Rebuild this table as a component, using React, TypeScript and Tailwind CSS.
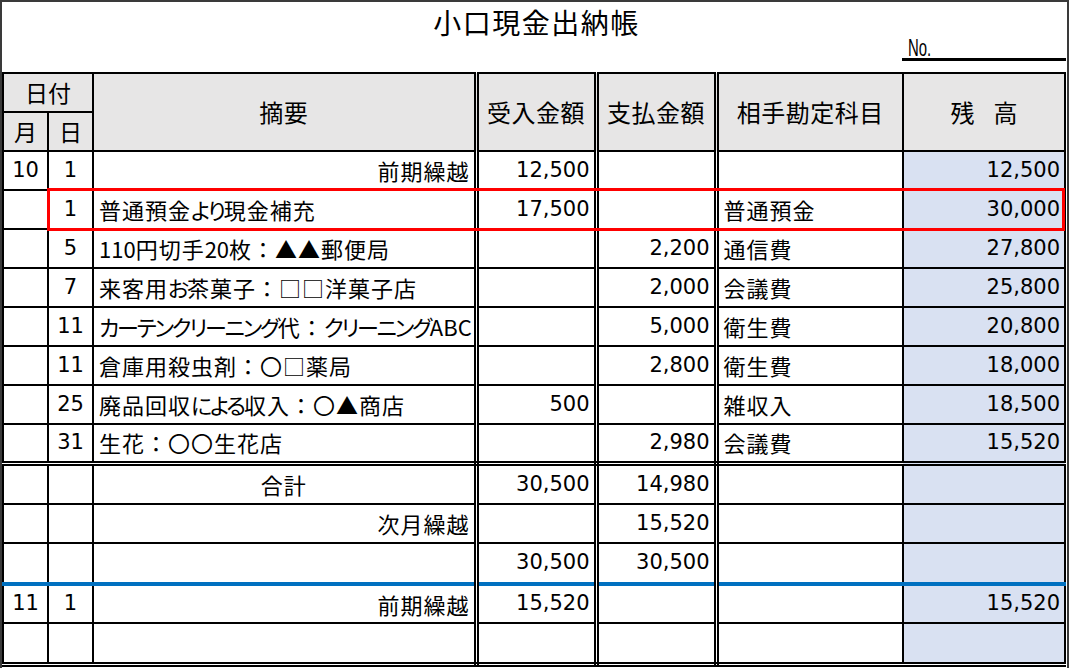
import React from "react";

type Row = {
  m?: string;
  d?: string;
  desc?: string;
  align?: "left" | "right" | "center";
  inn?: string;
  out?: string;
  acct?: string;
  bal?: string;
  bottom?: "double" | "blue";
  h: string;
};

const rows: Row[] = [
  { m: "10", d: "1", desc: "前期繰越", align: "right", inn: "12,500", bal: "12,500", h: "h-[39px]" },
  { d: "1", desc: "普通預金より現金補充", inn: "17,500", acct: "普通預金", bal: "30,000", h: "h-[39px]" },
  { d: "5", desc: "110円切手20枚：▲▲郵便局", out: "2,200", acct: "通信費", bal: "27,800", h: "h-[39px]" },
  { d: "7", desc: "来客用お茶菓子：□□洋菓子店", out: "2,000", acct: "会議費", bal: "25,800", h: "h-[39px]" },
  { d: "11", desc: "カーテンクリーニング代：クリーニングABC", out: "5,000", acct: "衛生費", bal: "20,800", h: "h-[39px]" },
  { d: "11", desc: "倉庫用殺虫剤：〇□薬局", out: "2,800", acct: "衛生費", bal: "18,000", h: "h-[39px]" },
  { d: "25", desc: "廃品回収による収入：〇▲商店", inn: "500", acct: "雑収入", bal: "18,500", h: "h-[39px]" },
  { d: "31", desc: "生花：〇〇生花店", out: "2,980", acct: "会議費", bal: "15,520", bottom: "double", h: "h-[39px]" },
  { desc: "合計", align: "center", inn: "30,500", out: "14,980", h: "h-[41px]" },
  { desc: "次月繰越", align: "right", out: "15,520", h: "h-[39px]" },
  { inn: "30,500", out: "30,500", bottom: "blue", h: "h-[41px]" },
  { m: "11", d: "1", desc: "前期繰越", align: "right", inn: "15,520", bal: "15,520", h: "h-[39px]" },
  { bottom: "double", h: "h-[41px]" },
];

const NUM = "font-['DejaVu_Sans','Noto_Sans_CJK_JP',sans-serif] text-[21px]";
const JP = "font-['Noto_Sans_CJK_JP',sans-serif] text-[22px]";

function JpText({ text }: { text: string }) {
  const parts = text.match(/[ぁ-ゖァ-ヺー]+|[A-Za-z0-9]+|[^ぁ-ゖァ-ヺーA-Za-z0-9]+/g) ?? [];
  return (
    <>
      {parts.map((p, i) => {
        if (/[ぁ-ゖァ-ヺー]/.test(p[0]))
          return (
            <span key={i} className="[font-feature-settings:'palt'] tracking-[-2.2px]">
              {p}
            </span>
          );
        if (/[A-Za-z0-9]/.test(p[0]))
          return (
            <span key={i} className="tracking-[0px]">
              {p}
            </span>
          );
        return (
          <span key={i} className="tracking-[1px]">
            {p}
          </span>
        );
      })}
    </>
  );
}

export default function App() {
  const th = `border-2 border-black font-normal p-0 ${JP}`;
  return (
    <div className="w-[1069px] h-[668px] bg-white border-t-2 border-l-2 border-r-2 border-[#3a3a3a] relative overflow-hidden text-black">
      <div className="h-[70px] flex flex-col">
        <div className="text-center font-['Noto_Sans_CJK_JP',sans-serif] text-[28px] leading-[30px] tracking-[1.5px] pt-[5px] pl-[4px]">
          小口現金出納帳
        </div>
        <div className="flex justify-end pr-[1px]">
          <div className="w-[164px] h-[24px] border-b-[3px] border-black pl-[6px] flex items-end">
            <span className="font-['Liberation_Sans',sans-serif] text-[24px] leading-[21px] inline-block origin-left scale-x-[0.62]">
              No.
            </span>
          </div>
        </div>
      </div>
      <table className="border-collapse table-fixed w-[1064px]">
        <colgroup>
          <col className="w-[45px]" />
          <col className="w-[45px]" />
          <col className="w-[383px]" />
          <col className="w-[120px]" />
          <col className="w-[120px]" />
          <col className="w-[187px]" />
          <col className="w-[162px]" />
        </colgroup>
        <thead>
          <tr className="h-[39px] bg-[#e7e6e6]">
            <th colSpan={2} className={`${th} text-[23px]`}>日付</th>
            <th rowSpan={2} className={`${th} text-[24px] tracking-[0.5px] [border-right:5px_double_#000]`}>摘要</th>
            <th rowSpan={2} className={`${th} text-[24px] tracking-[0.5px] [border-right:5px_double_#000]`}>受入金額</th>
            <th rowSpan={2} className={`${th} text-[24px] tracking-[0.5px] [border-right:5px_double_#000]`}>支払金額</th>
            <th rowSpan={2} className={`${th} text-[24px] tracking-[0.5px]`}>相手勘定科目</th>
            <th rowSpan={2} className={`${th} text-[24px]`}>
              <span>残</span>
              <span className="ml-[19px]">高</span>
            </th>
          </tr>
          <tr className="h-[39px] bg-[#e7e6e6]">
            <th className={`${th} text-[23px]`}>月</th>
            <th className={`${th} text-[23px]`}>日</th>
          </tr>
        </thead>
        <tbody>
          {rows.map((r, i) => {
            const b =
              r.bottom === "double"
                ? "[border-bottom:5px_double_#000]"
                : r.bottom === "blue"
                ? "[border-bottom:4px_solid_#0070c0]"
                : "";
            const descAlign =
              r.align === "right" ? "text-right pr-[4px]" : r.align === "center" ? "text-center" : "text-left pl-[5px]";
            return (
              <tr key={i} className={r.h}>
                <td className={`border-2 border-black p-0 text-center ${NUM} ${b}`}>{r.m ?? ""}</td>
                <td className={`border-2 border-black p-0 text-center ${NUM} ${b}`}>{r.d ?? ""}</td>
                <td className={`border-2 border-black p-0 whitespace-nowrap overflow-hidden ${JP} ${descAlign} [border-right:5px_double_#000] ${b}`}>
                  <JpText text={r.desc ?? ""} />
                </td>
                <td className={`border-2 border-black p-0 pr-[4px] text-right ${NUM} [border-right:5px_double_#000] ${b}`}>{r.inn ?? ""}</td>
                <td className={`border-2 border-black p-0 pr-[4px] text-right ${NUM} [border-right:5px_double_#000] ${b}`}>{r.out ?? ""}</td>
                <td className={`border-2 border-black p-0 pl-[5px] text-left ${JP} tracking-[1px] ${b}`}>{r.acct ?? ""}</td>
                <td className={`border-2 border-black p-0 pr-[4px] text-right bg-[#d9e1f2] ${NUM} ${b}`}>{r.bal ?? ""}</td>
              </tr>
            );
          })}
        </tbody>
      </table>
      <div className="absolute left-[45px] top-[186px] w-[1018px] h-[43px] border-[3px] border-[#ff0000] pointer-events-none" />
    </div>
  );
}
